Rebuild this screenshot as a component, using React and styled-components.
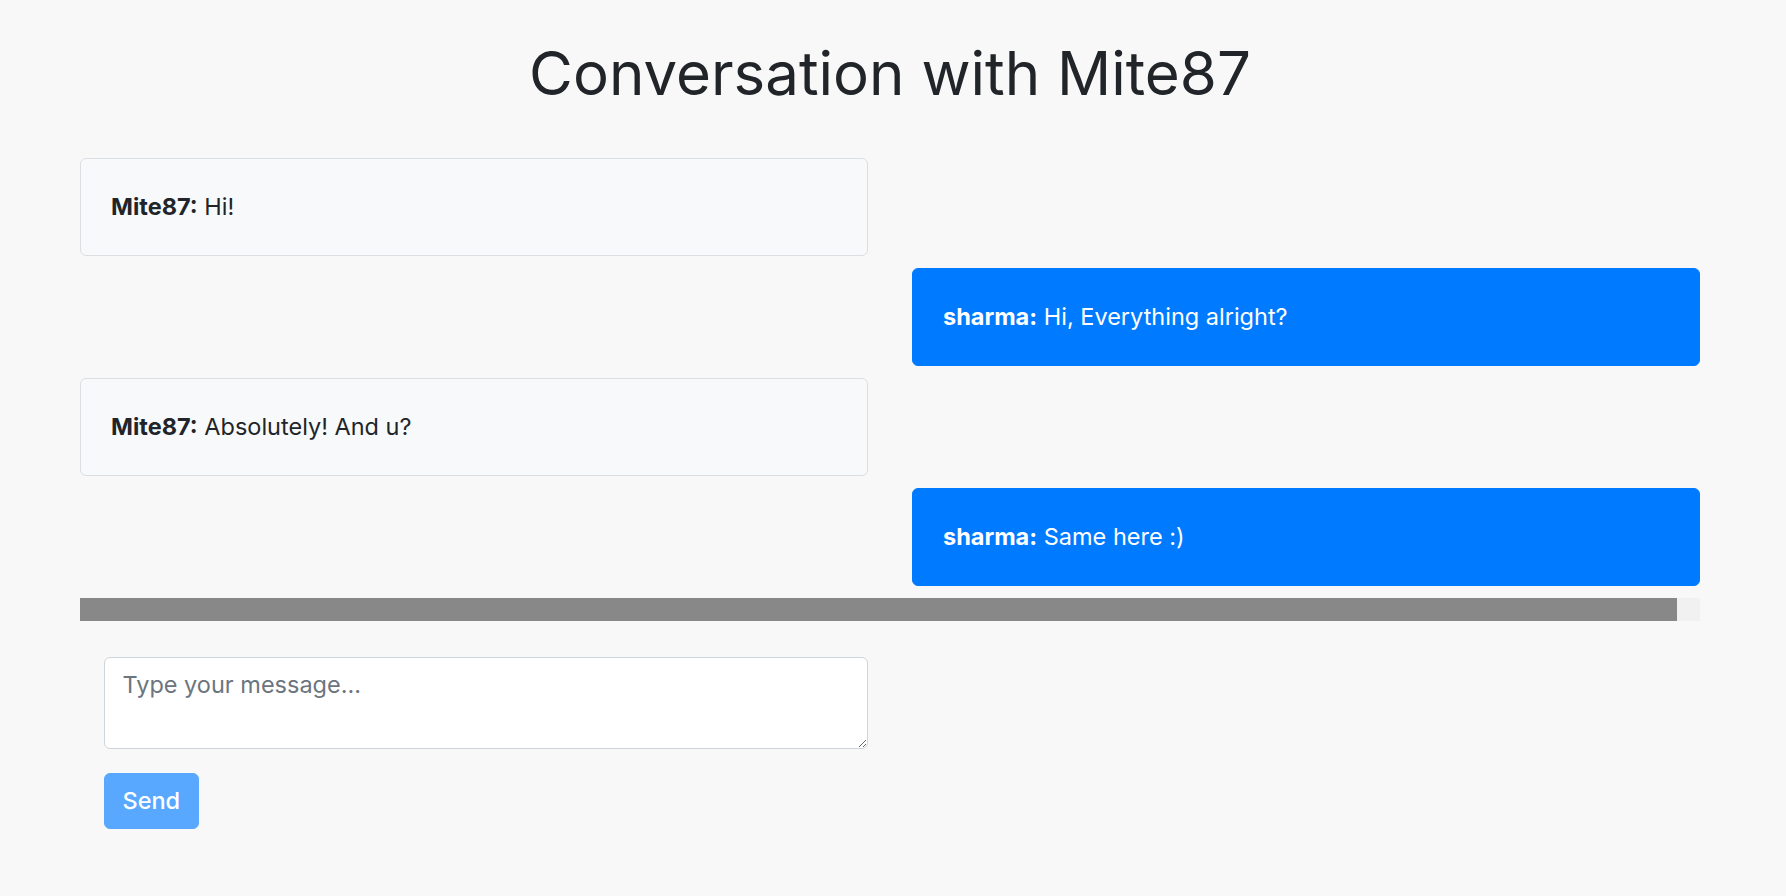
import React from "react";
import styled, { createGlobalStyle } from "styled-components";

const GlobalStyle = createGlobalStyle`
  html, body { margin: 0; padding: 0; }
  body {
    background: #f8f8f8;
    color: #212529;
    font-family: Inter, "Noto Sans", sans-serif;
  }
  * { box-sizing: border-box; }
`;

const Page = styled.main`
  padding: 37px 86px 40px 80px;
`;

const Title = styled.h1`
  margin: 0 0 49px;
  text-align: center;
  font-size: 60px;
  font-weight: 400;
  line-height: 72px;
  color: #212529;
`;

const MessagePane = styled.section`
  display: flex;
  flex-direction: column;
`;

const MessageList = styled.div`
  display: flex;
  flex-direction: column;
`;

const Bubble = styled.div`
  width: calc(50% - 22px);
  align-self: ${(p) => (p.$mine ? "flex-end" : "flex-start")};
  margin-bottom: 12.5px;
  padding: 30px 30px;
  border: 1px solid ${(p) => (p.$mine ? "#007bff" : "#dcdfe2")};
  border-radius: 6px;
  background: ${(p) => (p.$mine ? "#007bff" : "#f8f9fa")};
  color: ${(p) => (p.$mine ? "#ffffff" : "#212529")};
  font-size: 23.5px;
  line-height: 35.5px;
`;

const Author = styled.strong`
  font-weight: 700;
`;

const ScrollTrack = styled.div`
  height: 23px;
  background: #f1f1f1;
  display: flex;
`;

const ScrollThumb = styled.div`
  height: 100%;
  background: #888888;
`;

const Composer = styled.form`
  width: calc(50% - 22px);
  padding: 36px 0 0 23.5px;
  display: flex;
  flex-direction: column;
  align-items: flex-start;
  gap: 24.5px;
`;

const MessageInput = styled.textarea`
  display: block;
  width: 100%;
  height: 91.5px;
  padding: 9px 18px;
  border: 1px solid #ced4da;
  border-radius: 6px;
  background: #ffffff;
  color: #495057;
  font-family: Inter, "Noto Sans", sans-serif;
  font-size: 23.5px;
  line-height: 36px;
  resize: both;

  &::placeholder {
    color: #6c757d;
  }
`;

const SendButton = styled.button`
  height: 56px;
  padding: 9px 18px;
  border: 1px solid #57a8fe;
  border-radius: 6px;
  background: #57a8fe;
  color: #ffffff;
  font-family: Inter, "Noto Sans", sans-serif;
  font-size: 23.5px;
  font-weight: 500;
  line-height: 36px;
  cursor: default;
`;

const messages = [
  { author: "Mite87", text: "Hi!", mine: false },
  { author: "sharma", text: "Hi, Everything alright?", mine: true },
  { author: "Mite87", text: "Absolutely! And u?", mine: false },
  { author: "sharma", text: "Same here :)", mine: true },
];

// visible width / scrollable width of the message list
const thumbRatio = 1597 / 1620;

export default function App() {
  return (
    <>
      <GlobalStyle />
      <Page>
        <Title>Conversation with Mite87</Title>
        <MessagePane>
          <MessageList>
            {messages.map((m, i) => (
              <Bubble key={i} $mine={m.mine}>
                <Author>{m.author}:</Author> {m.text}
              </Bubble>
            ))}
          </MessageList>
          <ScrollTrack aria-hidden="true">
            <ScrollThumb style={{ width: `${thumbRatio * 100}%` }} />
          </ScrollTrack>
        </MessagePane>
        <Composer onSubmit={(e) => e.preventDefault()}>
          <MessageInput placeholder="Type your message..." />
          <SendButton type="submit" disabled>
            Send
          </SendButton>
        </Composer>
      </Page>
    </>
  );
}
